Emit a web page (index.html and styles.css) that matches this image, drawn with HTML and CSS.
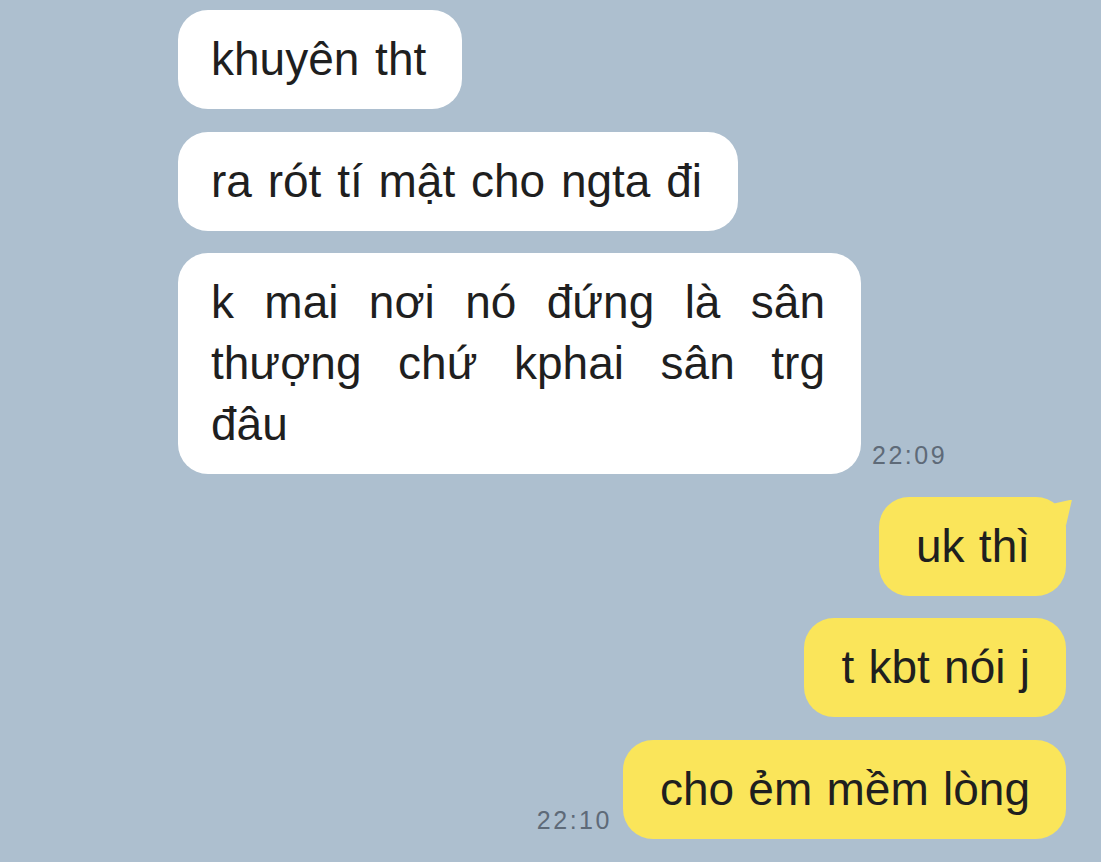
FILE: index.html
```html
<!DOCTYPE html>
<html lang="vi">
<head>
<meta charset="utf-8">
<title>Chat</title>
<link rel="stylesheet" href="styles.css">
</head>
<body>
<div class="chat">
  <div class="row in">
    <div class="bubble white">khuyên tht</div>
  </div>
  <div class="row in">
    <div class="bubble white">ra rót tí mật cho ngta đi</div>
  </div>
  <div class="row in">
    <div class="bubble white wide">k mai nơi nó đứng là sân thượng chứ kphai sân trg đâu</div>
    <span class="time">22:09</span>
  </div>
  <div class="row out">
    <div class="bubble yellow tail">uk thì</div>
  </div>
  <div class="row out">
    <div class="bubble yellow">t kbt nói j</div>
  </div>
  <div class="row out">
    <span class="time">22:10</span>
    <div class="bubble yellow">cho ẻm mềm lòng</div>
  </div>
</div>
</body>
</html>
```
FILE: styles.css
```css
html, body {
  margin: 0;
  padding: 0;
  background: #adbfcf;
  height: 100%;
  overflow: hidden;
}

.chat {
  display: flex;
  flex-direction: column;
  gap: 22.5px;
  padding: 10px 35px 0 178px;
  font-family: "Liberation Sans", Arial, sans-serif;
}

.row {
  display: flex;
  align-items: flex-end;
  gap: 11px;
}

.row.out {
  justify-content: flex-end;
}

.bubble {
  font-size: 46px;
  line-height: 61px;
  color: #1f1f1f;
  padding: 19px 36px 19px 33px;
  border-radius: 30px;
  position: relative;
}

.bubble.white {
  background: #ffffff;
  word-spacing: 3px;
}

.bubble.yellow {
  background: #fae55a;
  word-spacing: 1.5px;
  padding: 19px 36px 19px 37px;
}

.bubble.wide {
  width: 614px;
  text-align: justify;
}

.bubble.tail::after {
  content: "";
  position: absolute;
  top: 3px;
  right: -6px;
  width: 27px;
  height: 26px;
  background: #fae55a;
  clip-path: polygon(0 6px, 27px 0, 21px 26px);
}

.time {
  font-size: 25px;
  letter-spacing: 2.5px;
  color: #5e6a78;
  line-height: 25px;
  padding-bottom: 6px;
}
```
